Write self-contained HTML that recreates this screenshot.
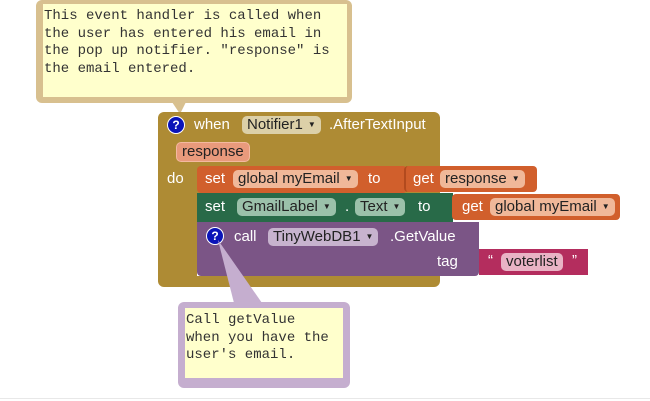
<!DOCTYPE html>
<html><head><meta charset="utf-8"><style>
body{margin:0;width:650px;height:401px;background:#fff;position:relative;overflow:hidden;font-family:"Liberation Sans",Arial,sans-serif;}
.a{position:absolute;}
.t{position:absolute;color:#fff;font-size:15px;white-space:nowrap;line-height:18px;}
.p{position:absolute;border-radius:5px;font-size:15px;line-height:18px;padding:0 5px;white-space:nowrap;color:#222;}
.p i{font-style:normal;font-size:8px;margin-left:5px;vertical-align:2px;}
.mono{font-family:"Liberation Mono",monospace;font-size:14px;line-height:17.5px;color:#333;white-space:pre;}
.q{position:absolute;width:16px;height:16px;border-radius:50%;background:#0a13b8;color:#fff;font-weight:bold;font-size:12px;text-align:center;line-height:16px;border:1px solid #fff;}
</style></head><body>
<div class="a" style="left:36px;top:0;width:316px;height:103px;background:#d8c08f;border-radius:6px;"></div>
<div class="a" style="left:43px;top:4px;width:304px;height:93px;background:#ffffcc;"></div>
<div class="a mono" style="left:44px;top:8px;">This event handler is called when
the user has entered his email in
the pop up notifier. "response" is
the email entered.</div>
<svg class="a" style="left:0;top:0" width="650" height="401">
<polygon points="172,102 186,102 180,114" fill="#d8c08f"/>
</svg>
<div class="a" style="left:158px;top:112px;width:282px;height:175px;background:#ae8b34;border-radius:6px;"></div>
<div class="a" style="left:197px;top:222px;width:243px;height:54px;background:#fff;"></div>
<div class="q" style="left:167px;top:116px;">?</div>
<div class="t" style="left:194px;top:116px;">when</div>
<div class="p" style="left:242px;top:116px;background:#dcd0a8;">Notifier1<i>▼</i></div>
<div class="t" style="left:329px;top:116px;">.AfterTextInput</div>
<div class="p" style="left:176px;top:142px;background:#e99a7c;border:1px solid #f3b9a0;">response</div>
<div class="t" style="left:167px;top:170px;">do</div>
<div class="a" style="left:197px;top:166px;width:210px;height:27px;background:#d15f2c;border-radius:4px;"></div>
<div class="t" style="left:205px;top:170px;">set</div>
<div class="p" style="left:233px;top:170px;background:#f0b899;">global myEmail<i>▼</i></div>
<div class="t" style="left:368px;top:170px;">to</div>
<div class="a" style="left:404px;top:166px;width:131px;height:26px;background:#d15f2c;border-radius:4px;border-left:2px solid #b24a1e;"></div>
<div class="t" style="left:413px;top:170px;">get</div>
<div class="p" style="left:440px;top:170px;background:#f0b899;">response<i>▼</i></div>
<div class="a" style="left:197px;top:193px;width:256px;height:29px;background:#286a48;"></div>
<div class="t" style="left:205px;top:198px;">set</div>
<div class="p" style="left:237px;top:198px;background:#9bc1aa;">GmailLabel<i>▼</i></div>
<div class="t" style="left:345px;top:198px;">.</div>
<div class="p" style="left:355px;top:198px;background:#9bc1aa;">Text<i>▼</i></div>
<div class="t" style="left:418px;top:198px;">to</div>
<div class="a" style="left:452px;top:194px;width:168px;height:26px;background:#d15f2c;border-radius:4px;"></div>
<div class="t" style="left:462px;top:198px;">get</div>
<div class="p" style="left:490px;top:198px;background:#f0b899;">global myEmail<i>▼</i></div>
<div class="a" style="left:197px;top:222px;width:282px;height:54px;background:#7b5586;border-radius:0 0 4px 4px;"></div>
<div class="q" style="left:206px;top:227px;">?</div>
<div class="t" style="left:234px;top:228px;">call</div>
<div class="p" style="left:268px;top:228px;background:#c7b3ce;">TinyWebDB1<i>▼</i></div>
<div class="t" style="left:390px;top:228px;">.GetValue</div>
<div class="t" style="left:437px;top:253px;">tag</div>
<div class="a" style="left:479px;top:249px;width:109px;height:26px;background:#b42d5e;"></div>
<div class="t" style="left:488px;top:252px;">“</div>
<div class="p" style="left:501px;top:253px;background:#e9b3c5;">voterlist</div>
<div class="t" style="left:572px;top:252px;">”</div>
<svg class="a" style="left:0;top:0" width="650" height="401">
<polygon points="218,240 234,303 262,303" fill="#c5aecf"/>
</svg>
<div class="a" style="left:178px;top:302px;width:172px;height:86px;background:#c5aecf;border-radius:6px;"></div>
<div class="a" style="left:185px;top:308px;width:158px;height:70px;background:#ffffcc;"></div>
<div class="a mono" style="left:186px;top:312px;">Call getValue
when you have the
user's email.</div>
<div class="a" style="left:0;top:398px;width:650px;height:1px;background:#e8e8e8;"></div>
</body></html>
